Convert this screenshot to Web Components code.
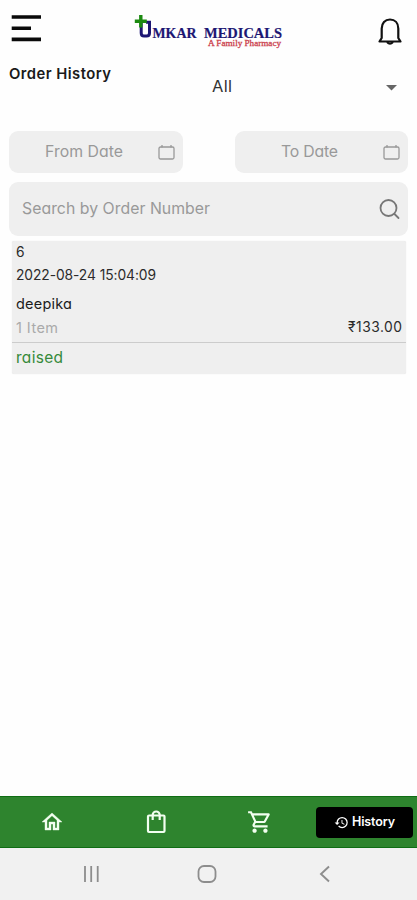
<!DOCTYPE html>
<html lang="en">
<head>
<meta charset="utf-8">
<meta name="viewport" content="width=device-width, initial-scale=1">
<title>Order History</title>
<style>
    body {
        margin: 0;
        background-color: #fefefe;
        font-family: Inter, "Open Sans", sans-serif;
        font-feature-settings: "cv11", "ss03";
    }
</style>
</head>
<body>
<order-history-page></order-history-page>

<script>
// One line of text, its letter spacing is adjusted so that it is `width` px wide
class FitText extends HTMLElement {
    constructor() {
        super();
        this.attachShadow({ mode: 'open' });
        this.shadowRoot.innerHTML = `
            <style>
                :host {
                    display: block;
                    white-space: nowrap;
                }

                span {
                    display: inline-block;
                }
            </style>
            <span><slot></slot></span>
        `;
    }

    connectedCallback() {
        const width = Number(this.getAttribute('width'));
        const span = this.shadowRoot.querySelector('span');
        const count = this.textContent.length;
        if (!width || count < 2) return;
        const spacing = (width - span.getBoundingClientRect().width) / (count - 1);
        span.style.letterSpacing = `${spacing}px`;
        span.style.marginRight = `${-spacing}px`;
    }
}

class AppHeader extends HTMLElement {
    constructor() {
        super();
        this.attachShadow({ mode: 'open' });
        this.shadowRoot.innerHTML = `
            <style>
                :host {
                    display: grid;
                    grid-template-columns: 31px 152px 25px;
                    align-items: center;
                    justify-content: space-between;
                    height: 60px;
                    padding: 0 14px 0 11px;
                    box-sizing: border-box;
                }

                svg {
                    display: block;
                }

                .logo {
                    margin-left: -2px;
                }
            </style>
            <svg width="31" height="30" viewBox="0 0 31 30" stroke="#0a0a0a" stroke-width="3.600" stroke-linecap="square">
                <path d="M2.500 2H28.200M2.500 13.200H18.200M2.500 24.400H28.200"/>
            </svg>
            <svg class="logo" width="152" height="50" viewBox="0 0 152 50">
                <path d="M9.200 17V28Q9.200 31 12 31H14.500Q17.500 31 17.500 28V17.300H14" fill="none" stroke="#1c1673" stroke-width="3"/>
                <path d="M8.800 10V22.500M2.800 16.300H14.800" stroke="#1c8a10" stroke-width="3.400"/>
                <g font-family="Liberation Serif, serif">
                    <text x="20.500" y="32.500" font-size="15.500" font-weight="bold" fill="#1c1673" stroke="#1c1673" stroke-width=".2" textLength="44" lengthAdjust="spacingAndGlyphs">MKAR</text>
                    <text x="72" y="32.500" font-size="15.500" font-weight="bold" fill="#1c1673" stroke="#1c1673" stroke-width=".2" textLength="78" lengthAdjust="spacingAndGlyphs">MEDICALS</text>
                    <text x="76" y="41" font-size="8.500" fill="#cc4450" stroke="#cc4450" stroke-width=".3" textLength="73" lengthAdjust="spacingAndGlyphs">A Family Pharmacy</text>
                </g>
            </svg>
            <svg width="25" height="30" viewBox="0 0 25 30" fill="none" stroke="#111" stroke-width="2.200" stroke-linejoin="round">
                <path d="M1.500 26.500L3.700 23V13.500C3.700 8 7 4.500 12 4.500S20.300 8 20.300 13.500V23L22.500 26.500Z"/>
                <path d="M9 27Q12 30.200 15 27"/>
            </svg>
        `;
    }
}

class DateField extends HTMLElement {
    constructor() {
        super();
        this.attachShadow({ mode: 'open' });
        this.shadowRoot.innerHTML = `
            <style>
                :host {
                    display: flex;
                    align-items: center;
                    justify-content: space-between;
                    box-sizing: border-box;
                    height: 42px;
                    border-radius: 9px;
                    background-color: #efefef;
                    color: #999;
                    font-size: 15.8px;
                    padding-right: 8px;
                }

                .label {
                    padding-bottom: 2px;
                }
            </style>
            <div class="label"><slot></slot></div>
            <svg width="17" height="16" viewBox="0 0 17 16" fill="none" stroke="#999" stroke-width="1.300">
                <rect x="1" y="3" width="15" height="12" rx="1.500"/>
                <path d="M4 1V3.500M13 1V3.500"/>
            </svg>
        `;
    }
}

class SearchField extends HTMLElement {
    constructor() {
        super();
        this.attachShadow({ mode: 'open' });
        this.shadowRoot.innerHTML = `
            <style>
                :host {
                    display: flex;
                    align-items: center;
                    justify-content: space-between;
                    box-sizing: border-box;
                    height: 54px;
                    padding: 0 8px 0 13px;
                    border-radius: 9px;
                    background-color: #efefef;
                    color: #999;
                    font-size: 15.800px;
                }

                .label {
                    padding-bottom: 1px;
                }
            </style>
            <div class="label"><slot></slot></div>
            <svg width="21" height="22" viewBox="0 0 21 22" fill="none" stroke="#777" stroke-width="1.800" stroke-linecap="round">
                <circle cx="9.500" cy="10" r="8"/>
                <path d="M15.500 16L19.500 20"/>
            </svg>
        `;
    }
}

class OrderCard extends HTMLElement {
    constructor() {
        super();
        this.attachShadow({ mode: 'open' });
        this.shadowRoot.innerHTML = `
            <style>
                :host {
                    display: block;
                    box-sizing: border-box;
                    height: 133px;
                    background-color: #efefef;
                    color: #2b2b2b;
                    font-size: 13.800px;
                    border-radius: 2px;
                    box-shadow: 0 0 1px #ddd;
                }

                .line {
                    padding-left: 4px;
                    height: 23px;
                    line-height: 23px;
                }

                .name {
                    padding-top: 5px;
                    color: #1c1c1c;
                    font-size: 14.500px;
                }

                .summary {
                    display: flex;
                    justify-content: space-between;
                    padding-right: 4px;
                    height: 24px;
                    line-height: 25px;
                }

                .items {
                    color: #aaa;
                    font-size: 14.500px;
                }

                .status {
                    border-top: 1px solid #ccc;
                    margin-top: 3px;
                    height: 30px;
                    line-height: 30px;
                    color: #368a3a;
                    font-size: 15.500px;
                }
            </style>
            <div class="line"><slot name="number"></slot></div>
            <div class="line"><slot name="date"></slot></div>
            <div class="line name"><slot name="name"></slot></div>
            <div class="line summary">
                <div class="items"><slot name="items"></slot></div>
                <slot name="price"></slot>
            </div>
            <div class="line status"><slot name="status"></slot></div>
        `;
    }
}

class TabBar extends HTMLElement {
    constructor() {
        super();
        this.attachShadow({ mode: 'open' });
        this.shadowRoot.innerHTML = `
            <style>
                :host {
                    display: grid;
                    grid-template-columns: 104px 104px 104px 1fr;
                    align-items: center;
                    justify-items: center;
                    box-sizing: border-box;
                    height: 52px;
                    background-color: #2e842e;
                    border-top: 1px solid #0f6d14;
                    border-bottom: 1px solid #0f6d14;
                }

                .active {
                    display: flex;
                    align-items: center;
                    justify-content: center;
                    gap: 3px;
                    width: 97px;
                    height: 31px;
                    border-radius: 4px;
                    background-color: #000;
                    color: #fff;
                    font-size: 12.500px;
                    font-weight: 600;
                }

                .label {
                    padding-bottom: 2px;
                }
            </style>
            <svg width="24" height="24" viewBox="0 0 24 24" fill="#f2fff0" stroke="#f2fff0" stroke-width=".4">
                <path d="M12 5.690l5 4.500V18h-2v-6H9v6H7v-7.810l5-4.500M12 3L2 12h3v8h6v-6h2v6h6v-8h3L12 3z"/>
            </svg>
            <svg width="24" height="26" viewBox="0 0 24 26" fill="none" stroke="#f2fff0" stroke-width="2.200" stroke-linejoin="round">
                <rect x="4" y="6.500" width="16.500" height="16.500" rx="1"/>
                <path d="M8.700 11V6A3.500 3.500 0 0 1 15.700 6V11"/>
            </svg>
            <svg width="26" height="26" viewBox="0 0 24 24" fill="#f2fff0">
                <path d="M15.550 13c.75 0 1.410-.41 1.750-1.030l3.580-6.490A.996.996 0 0 0 20.010 4H5.210l-.94-2H1v2h2l3.600 7.590-1.350 2.440C4.520 15.370 5.480 17 7 17h12v-2H7l1.100-2h7.450zM6.160 6h12.150l-2.760 5H8.530L6.160 6zM7 18c-1.100 0-1.990.9-1.990 2S5.900 22 7 22s2-.9 2-2-.9-2-2-2zm10 0c-1.100 0-1.990.9-1.990 2s.89 2 1.990 2 2-.9 2-2-.9-2-2-2z"/>
            </svg>
            <div class="active">
                <svg width="15" height="15" viewBox="0 0 24 24" fill="#fff">
                    <path d="M13 3a9 9 0 0 0-9 9H1l3.890 3.890.07.14L9 12H6c0-3.870 3.130-7 7-7s7 3.130 7 7-3.130 7-7 7c-1.930 0-3.680-.79-4.940-2.060l-1.420 1.420A8.954 8.954 0 0 0 13 21a9 9 0 0 0 0-18zm-1 5v5l4.280 2.540.72-1.210-3.500-2.080V8H12z"/>
                </svg>
                <div class="label"><slot></slot></div>
            </div>
        `;
    }
}

class SystemBar extends HTMLElement {
    constructor() {
        super();
        this.attachShadow({ mode: 'open' });
        this.shadowRoot.innerHTML = `
            <style>
                :host {
                    display: flex;
                    align-items: center;
                    justify-content: space-between;
                    box-sizing: border-box;
                    height: 52px;
                    padding: 0 86px 0 82px;
                    background-color: #f1f1f1;
                }

                .home {
                    margin-right: 5px;
                }
            </style>
            <svg width="18" height="18" viewBox="0 0 18 18" stroke="#8d8d8d" stroke-width="1.800">
                <path d="M3 1V17M9.200 1V17M15.700 1V17"/>
            </svg>
            <svg class="home" width="20" height="20" viewBox="0 0 20 20" fill="none" stroke="#8d8d8d" stroke-width="1.800">
                <rect x="1.500" y="2" width="17" height="16" rx="5.500"/>
            </svg>
            <svg width="12" height="18" viewBox="0 0 12 18" fill="none" stroke="#8d8d8d" stroke-width="1.900">
                <path d="M10 1.500L2 9L10 16.500"/>
            </svg>
        `;
    }
}

class OrderHistoryPage extends HTMLElement {
    constructor() {
        super();
        this.attachShadow({ mode: 'open' });
        this.shadowRoot.innerHTML = `
            <style>
                :host {
                    display: flex;
                    flex-direction: column;
                    height: 900px;
                }

                .title {
                    display: grid;
                    grid-template-columns: 203px 1fr auto;
                    height: 71px;
                    padding: 0 20px 0 9px;
                    box-sizing: border-box;
                }

                .title h1 {
                    margin: 3px 0 0;
                    font-size: 14.800px;
                    line-height: 22px;
                    font-weight: 600;
                    color: #1a1a1a;
                }

                .filter {
                    margin-top: 14px;
                    font-size: 16.500px;
                    line-height: 24px;
                    color: #333;
                }

                .title svg {
                    margin-top: 25px;
                }

                .dates {
                    display: flex;
                    justify-content: space-between;
                    padding: 0 9px;
                }

                .from {
                    width: 174px;
                    padding-left: 36px;
                }

                .to {
                    width: 173px;
                    padding-left: 46px;
                }

                search-field {
                    margin: 9px 9px 5px;
                }

                order-card {
                    margin: 0 11px 0 12px;
                }

                tab-bar {
                    margin-top: auto;
                }
            </style>
            <app-header></app-header>
            <div class="title">
                <h1><fit-text width="102">Order History</fit-text></h1>
                <fit-text class="filter" width="20">All</fit-text>
                <svg width="11" height="6" viewBox="0 0 11 6" fill="#666"><path d="M0 0H11L5.500 5.500Z"/></svg>
            </div>
            <div class="dates">
                <date-field class="from"><fit-text width="78">From Date</fit-text></date-field>
                <date-field class="to"><fit-text width="57">To Date</fit-text></date-field>
            </div>
            <search-field><fit-text width="188">Search by Order Number</fit-text></search-field>
            <order-card>
                <fit-text slot="number">6</fit-text>
                <fit-text slot="date" width="140">2022-08-24 15:04:09</fit-text>
                <fit-text slot="name" width="56">deepika</fit-text>
                <fit-text slot="items" width="42">1 Item</fit-text>
                <fit-text slot="price" width="54">₹133.00</fit-text>
                <fit-text slot="status" width="47">raised</fit-text>
            </order-card>
            <tab-bar><fit-text width="43">History</fit-text></tab-bar>
            <system-bar></system-bar>
        `;
    }
}

customElements.define('app-header', AppHeader);
customElements.define('date-field', DateField);
customElements.define('search-field', SearchField);
customElements.define('order-card', OrderCard);
customElements.define('tab-bar', TabBar);
customElements.define('system-bar', SystemBar);
// The page has to be in place before the texts in it are measured
customElements.define('order-history-page', OrderHistoryPage);
customElements.define('fit-text', FitText);
</script>
</body>
</html>
